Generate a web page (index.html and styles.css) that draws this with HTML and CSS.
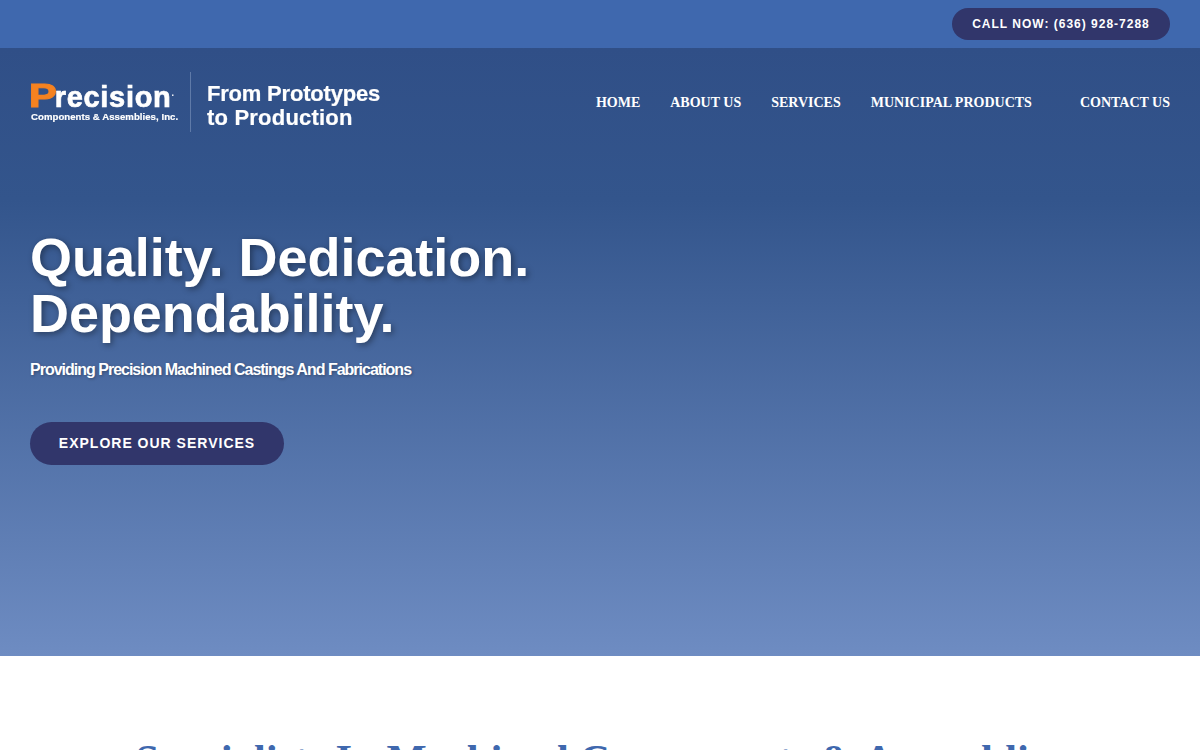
FILE: index.html
```html
<!DOCTYPE html>
<html>
	<head>
		<meta charset="UTF-8">
		<meta name="viewport" content="width=device-width" />
		<title>Precision Components &amp; Assemblies, Inc.</title>
		<link rel="stylesheet" href="styles.css">
	</head>
	<body>
		<div class="topbar">
			<a href="#" class="call">CALL NOW: (636) 928-7288</a>
		</div>
		<section class="hero">
			<header class="head">
				<a href="#" class="logo">
					<span class="brand">
						<span class="brand-name"><span class="brand-p">P</span>recision<sup>.</sup></span>
						<span class="brand-sub">Components &amp; Assemblies, Inc.</span>
					</span>
					<span class="tagline">From Prototypes<br><span class="tagline-low">to Production</span></span>
				</a>
				<nav class="menu">
					<a href="#">HOME</a>
					<a href="#">ABOUT US</a>
					<a href="#">SERVICES</a>
					<a href="#" class="has-sub">MUNICIPAL PRODUCTS</a>
					<a href="#">CONTACT US</a>
				</nav>
			</header>
			<div class="intro">
				<h1>Quality. Dedication.<br>Dependability.</h1>
				<p>Providing Precision Machined Castings And Fabrications</p>
				<a href="#" class="explore">EXPLORE OUR SERVICES</a>
			</div>
		</section>
		<section class="special">
			<h2>Specialists In Machined Components &amp; Assemblies</h2>
		</section>
	</body>
</html>
```

FILE: styles.css
```css
html, body{
	margin: 0;
	height: 750px;
	overflow: hidden;
}
body{
	font-family: "Liberation Sans", Arial, sans-serif;
	background: #fff;
}
a{
	color: #fff;
	text-decoration: none;
}
.topbar{
	height: 48px;
	box-sizing: border-box;
	padding: 8px 30px;
	display: flex;
	justify-content: flex-end;
	background: #3f68ae;
}
.call{
	height: 32px;
	width: 218px;
	border-radius: 16px;
	background: #31366b;
	font-size: 12px;
	font-weight: 700;
	letter-spacing: 1px;
	line-height: 32px;
	text-align: center;
}
.hero{
	height: 608px;
	background: linear-gradient(180deg, #304f87 0%, #33558c 25%, #6e8cc2 100%);
}
.head{
	display: flex;
	justify-content: space-between;
	align-items: center;
	padding: 24px 30px 0;
}
.logo{
	display: flex;
	align-items: center;
	height: 60px;
}
.brand{
	display: flex;
	flex-direction: column;
	width: 160px;
	height: 60px;
	justify-content: center;
	border-right: 1px solid #5f7aa8;
	filter: blur(.3px);
}
.brand-name{
	font-size: 29px;
	font-weight: 700;
	line-height: 30px;
	letter-spacing: .7px;
	white-space: nowrap;
	-webkit-text-stroke: .7px #fff;
}
.brand-p{
	color: #f58220;
	display: inline-block;
	font-size: 34px;
	line-height: 28px;
	letter-spacing: 0;
	transform: scaleX(1.22);
	transform-origin: left;
	margin: 0 3px 0 -1px;
	-webkit-text-stroke: 1.2px #f58220;
}
.brand-name sup{
	font-size: 9px;
	line-height: 0;
	letter-spacing: 0;
	-webkit-text-stroke: 0;
}
.brand-sub{
	padding-left: 1px;
	margin-top: -1px;
	font-size: 9.6px;
	font-weight: 700;
	line-height: 12px;
	letter-spacing: .05px;
	white-space: nowrap;
	-webkit-text-stroke: .2px #fff;
}
.tagline{
	padding: 7px 0 0 16px;
	font-size: 22px;
	font-weight: 700;
	line-height: 24px;
	letter-spacing: -.2px;
	white-space: nowrap;
	filter: blur(.3px);
	-webkit-text-stroke: .2px #fff;
}
.tagline-low{
	letter-spacing: .2px;
}
.menu{
	display: flex;
	gap: 30px;
	padding-top: 2px;
	font-family: "Liberation Serif", "Times New Roman", serif;
	font-size: 14px;
	font-weight: 700;
}
.has-sub{
	margin-right: 18px;
}
.intro{
	padding: 97px 30px 0;
}
.intro h1{
	margin: 0;
	color: #fff;
	font-size: 54px;
	font-weight: 700;
	line-height: 56px;
	letter-spacing: -.05px;
	text-shadow: 2px 2px 6px rgba(0, 0, 0, .4);
}
.intro p{
	margin: 17px 0 0;
	color: #fff;
	font-size: 16px;
	font-weight: 700;
	line-height: 24px;
	letter-spacing: -1px;
	text-shadow: 1px 1px 3px rgba(0, 0, 0, .3);
}
.explore{
	display: block;
	margin-top: 40px;
	width: 254px;
	height: 43px;
	border-radius: 22px;
	background: #31366b;
	font-size: 14px;
	font-weight: 700;
	letter-spacing: 1px;
	line-height: 43px;
	text-align: center;
}
.special{
	padding-top: 76px;
	text-align: center;
}
.special h2{
	margin: 0;
	color: #3f68ae;
	font-family: "Liberation Serif", "Times New Roman", serif;
	font-size: 42.6px;
	font-weight: 700;
	line-height: 56px;
	white-space: nowrap;
}
```
